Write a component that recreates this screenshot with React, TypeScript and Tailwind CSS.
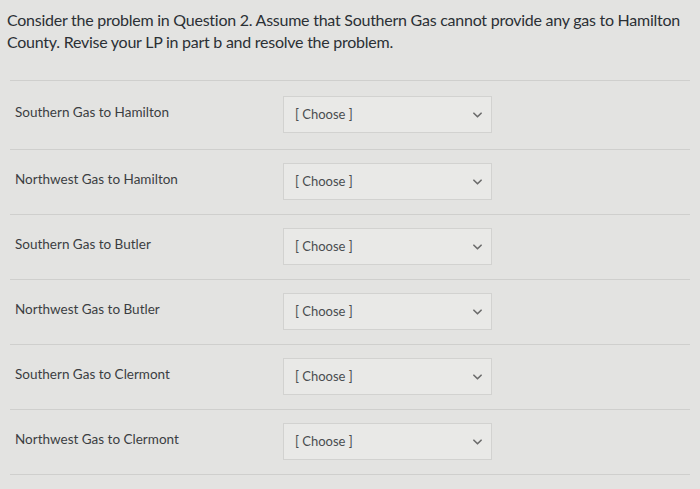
const rows = [
  "Southern Gas to Hamilton",
  "Northwest Gas to Hamilton",
  "Southern Gas to Butler",
  "Northwest Gas to Butler",
  "Southern Gas to Clermont",
  "Northwest Gas to Clermont",
];

function Chevron() {
  return (
    <svg width="9" height="6" viewBox="0 0 10 6" fill="none" stroke="#6b6b6b" strokeWidth="1.8" strokeLinecap="round" strokeLinejoin="round">
      <polyline points="1 1 5 5 9 1" />
    </svg>
  );
}

function ChooseSelect() {
  return (
    <div className="flex h-[37px] w-[209px] items-center justify-between border border-[#d2d2d0] bg-[#e9e9e7] pl-[11px] pr-[9px] text-[13px] text-[#4a4d50]">
      <span>[ Choose ]</span>
      <Chevron />
    </div>
  );
}

export default function App() {
  return (
    <div
      className="h-[489px] w-[700px] overflow-hidden bg-[#e3e3e1]"
      style={{ fontFamily: "Lato, 'Open Sans', sans-serif" }}
    >
      <p className="px-[7px] pt-[9px] text-[16px] leading-[22px] tracking-[-0.25px] text-[#2b3035]">
        Consider the problem in Question 2. Assume that Southern Gas cannot provide any gas to Hamilton County. Revise your LP in part b and resolve the problem.
      </p>

      <div className="mx-[10px] mt-[27px]">
        {rows.map((label, i) => (
          <div
            key={label}
            className={`flex items-start border-t border-[#cfcfcd] ${i === 0 ? "h-[69px]" : "h-[65px]"}`}
          >
            <div className={`w-[273px] pl-[5px] text-[13.5px] text-[#3b3e41] ${i === 0 ? "pt-[21px]" : "pt-[19px]"}`}>
              {label}
            </div>
            <div className={i === 0 ? "mt-[15px]" : "mt-[13px]"}>
              <ChooseSelect />
            </div>
          </div>
        ))}
        <div className="border-t border-[#cfcfcd]" />
      </div>
    </div>
  );
}
